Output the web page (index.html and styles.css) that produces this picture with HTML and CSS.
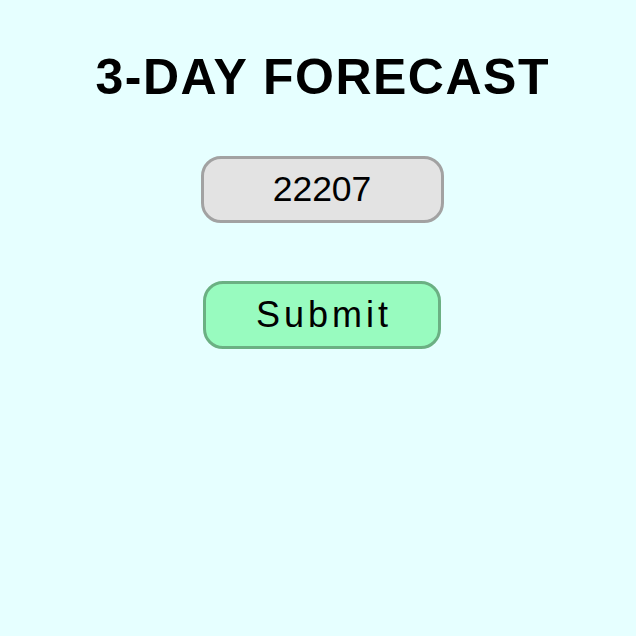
FILE: index.html
```html
<!DOCTYPE html>
<html>
<head>
<meta charset="utf-8">
<link rel="stylesheet" href="styles.css">
</head>
<body>
<main class="app">
  <h1 class="title">3-DAY FORECAST</h1>
  <input class="zip" type="text" value="22207">
  <button class="submit" type="button">Submit</button>
</main>
</body>
</html>
```
FILE: styles.css
```css
html, body {
  margin: 0;
  padding: 0;
  background: #e6ffff;
  height: 100%;
}
body {
  padding-left: 8px;
  font-family: "Liberation Sans", Arial, sans-serif;
  box-sizing: border-box;
}
.app {
  display: flex;
  flex-direction: column;
  align-items: center;
}
.title {
  margin: 48px 0 0;
  font-size: 50px;
  font-weight: bold;
  letter-spacing: 1.5px;
  text-indent: 1.5px;
  line-height: normal;
  color: #000;
}
.zip {
  margin-top: 50px;
  box-sizing: border-box;
  width: 243px;
  height: 67px;
  border: 3px solid #a2a2a2;
  border-radius: 20px;
  background: #e3e3e3;
  font-family: "Liberation Sans", Arial, sans-serif;
  font-size: 35.5px;
  text-align: center;
  color: #000;
  padding: 0;
  outline: none;
}
.submit {
  margin-top: 58px;
  box-sizing: border-box;
  width: 238px;
  height: 68px;
  border: 3px solid #6bb083;
  border-radius: 20px;
  background: #98fbbf;
  font-family: "Liberation Sans", Arial, sans-serif;
  font-size: 36px;
  letter-spacing: 4px;
  text-indent: 4px;
  color: #000;
  padding: 0;
}
```
